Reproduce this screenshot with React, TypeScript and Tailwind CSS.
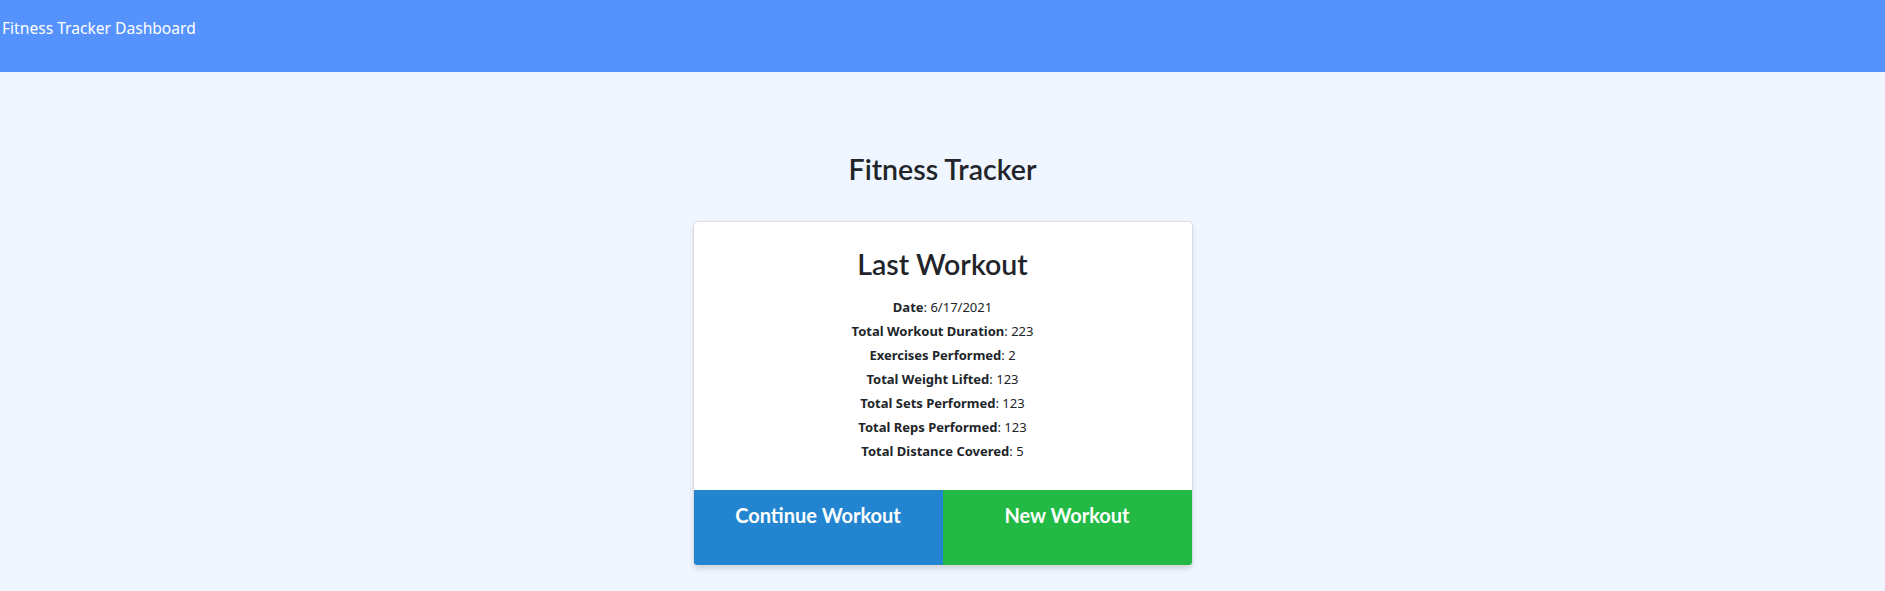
export default function App() {
  const details = [
    { label: "Date", value: "6/17/2021" },
    { label: "Total Workout Duration", value: "223" },
    { label: "Exercises Performed", value: "2" },
    { label: "Total Weight Lifted", value: "123" },
    { label: "Total Sets Performed", value: "123" },
    { label: "Total Reps Performed", value: "123" },
    { label: "Total Distance Covered", value: "5" },
  ];

  return (
    <div className="min-h-screen bg-[#eff6ff]">
      {/* Header */}
      <nav className="h-[72px] bg-[#5592fe] px-[2px] pt-[16px]">
        <span className="text-white text-[15.6px] font-['Noto_Sans',sans-serif]">Fitness Tracker Dashboard</span>
      </nav>

      <div className="flex flex-col items-center pt-[80px] font-['Lato',sans-serif]">
        <h1 className="text-[28.5px] font-semibold text-[#212529] leading-tight">Fitness Tracker</h1>

        {/* Card */}
        <div className="mt-[33px] w-[500px] bg-white border border-[#dcdcdc] rounded-[4px] shadow-md overflow-hidden">
          <div className="pt-[25px] pb-[27px] text-center">
            <h2 className="text-[28.5px] font-semibold text-[#212529] leading-tight mb-[13px]">Last Workout</h2>
            <div className="font-['Noto_Sans',sans-serif] text-[13px] text-[#212529]">
              {details.map((d) => (
                <p key={d.label} className="leading-[24px]">
                  <strong className="font-bold">{d.label}</strong>: {d.value}
                </p>
              ))}
            </div>
          </div>
          <div className="grid grid-cols-2 h-[75px]">
            <button className="bg-[#2385d0] text-white text-[20px] font-bold pt-[10px] flex justify-center">
              Continue Workout
            </button>
            <button className="bg-[#22ba45] text-white text-[20px] font-bold pt-[10px] flex justify-center">
              New Workout
            </button>
          </div>
        </div>
      </div>
    </div>
  );
}
